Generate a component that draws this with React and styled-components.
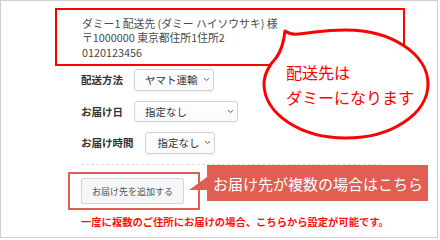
import React from "react";
import styled, { createGlobalStyle } from "styled-components";

const GlobalStyle = createGlobalStyle`
  html, body { margin: 0; padding: 0; background: #fff; }
  body { font-family: "Noto Sans CJK JP", "Noto Sans", sans-serif; }
`;

const Frame = styled.div`
  position: relative;
  width: 438px;
  height: 238px;
  box-sizing: border-box;
  border: 1px solid #cfcfcf;
  padding: 7px 0 0 54px;
  display: flex;
  flex-direction: column;
  overflow: hidden;
`;

const AddressBox = styled.div`
  width: 350px;
  box-sizing: border-box;
  border: 2px solid #ff0000;
  padding: 5.5px 0 5px 25px;
  font-size: 10.8px;
  line-height: 14.5px;
  color: #4a4a4a;
`;

const Form = styled.div`
  margin: 3px 0 0 26px;
  display: flex;
  flex-direction: column;
  gap: 10px;
`;

const Row = styled.div`
  display: flex;
  align-items: center;
  gap: 11px;
  height: 21.5px;
`;

const Label = styled.span`
  font-size: 10.5px;
  font-weight: bold;
  color: #333;
`;

const SelectBox = styled.div`
  width: ${(p) => p.$w}px;
  height: 21.5px;
  box-sizing: border-box;
  border: 1px solid #d2d2d2;
  border-radius: 3px;
  background: linear-gradient(#ffffff, #fafafa);
  box-shadow: 0 1px 1px rgba(0, 0, 0, 0.06);
  display: flex;
  align-items: center;
  justify-content: space-between;
  padding: 0 3px 0 ${(p) => p.$pl}px;
  font-size: 10.5px;
  color: #333;
`;

const Divider = styled.div`
  margin: 10px 0 0 26px;
  width: 300px;
  border-top: 1px dashed #dcdcdc;
`;

const ActionArea = styled.div`
  position: relative;
  margin-top: 7.5px;
`;

const AnnotBox = styled.div`
  margin-left: 13px;
  width: 132px;
  height: 38px;
  box-sizing: border-box;
  border: 2px solid #e05f52;
  padding: 4px 0 0 11px;
`;

const AddButton = styled.div`
  width: 103px;
  height: 26px;
  box-sizing: border-box;
  border: 1px solid #d5d5d5;
  border-radius: 2px;
  background: #f5f6f8;
  display: flex;
  align-items: center;
  justify-content: center;
  font-size: 9px;
  color: #555;
`;

const Callout = styled.div`
  position: absolute;
  left: 152px;
  top: -7px;
  width: 221px;
  height: 36px;
  box-sizing: border-box;
  background: #e05f52;
  color: #fff;
  font-size: 15px;
  padding-left: 6px;
  display: flex;
  align-items: center;
  white-space: nowrap;

  &::before {
    content: "";
    position: absolute;
    left: -18px;
    top: 12px;
    width: 0;
    height: 0;
    border-left: 18px solid transparent;
    border-bottom: 13px solid #e05f52;
  }
`;

const Note = styled.div`
  margin: 4.5px 0 0 26px;
  font-size: 10.3px;
  line-height: 14px;
  font-weight: bold;
  color: #ff1010;
  white-space: nowrap;
`;

const Bubble = styled.div`
  position: absolute;
  left: 259px;
  top: 25px;
  width: 172px;
  height: 116px;
`;

const BubbleText = styled.div`
  position: absolute;
  left: 26px;
  top: 33.5px;
  font-size: 16px;
  line-height: 25px;
  color: #ff0000;
  white-space: nowrap;
`;

const Chevron = () => (
  <svg width="7" height="5" viewBox="0 0 7 5">
    <path d="M1 1.2 L3.5 3.6 L6 1.2" fill="none" stroke="#555" strokeWidth="1" />
  </svg>
);

export default function App() {
  return (
    <>
      <GlobalStyle />
      <Frame>
        <AddressBox>
          <div>ダミー1 配送先 (ダミー ハイソウサキ) 様</div>
          <div>〒1000000 東京都住所1住所2</div>
          <div>0120123456</div>
        </AddressBox>
        <Form>
          <Row>
            <Label>配送方法</Label>
            <SelectBox $w={80} $pl={10}>
              ヤマト運輸
              <Chevron />
            </SelectBox>
          </Row>
          <Row>
            <Label>お届け日</Label>
            <SelectBox $w={104} $pl={10}>
              指定なし
              <Chevron />
            </SelectBox>
          </Row>
          <Row>
            <Label>お届け時間</Label>
            <SelectBox $w={70} $pl={12}>
              指定なし
              <Chevron />
            </SelectBox>
          </Row>
        </Form>
        <Divider />
        <ActionArea>
          <AnnotBox>
            <AddButton>お届け先を追加する</AddButton>
          </AnnotBox>
          <Callout>お届け先が複数の場合はこちら</Callout>
        </ActionArea>
        <Note>一度に複数のご住所にお届けの場合、こちらから設定が可能です。</Note>
        <Bubble>
          <svg width="172" height="116" viewBox="0 0 172 116">
            <path
              d="M25 5 C32 10, 40 8, 55 6 C70 4, 80 4, 86 4 A82 54 0 0 1 168 58 A82 54 0 0 1 86 112 A82 54 0 0 1 4 58 C4 48, 10 38, 16 32 C22 24, 24 14, 25 5 Z"
              fill="#fff"
              stroke="#ff0000"
              strokeWidth="3"
              strokeLinejoin="round"
            />
          </svg>
          <BubbleText>
            配送先は
            <br />
            ダミーになります
          </BubbleText>
        </Bubble>
      </Frame>
    </>
  );
}
